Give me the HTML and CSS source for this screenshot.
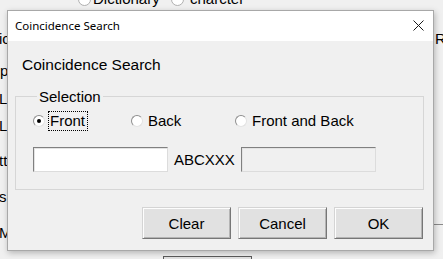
FILE: index.html
```html
<!DOCTYPE html>
<html>
<head>
<meta charset="utf-8">
<link rel="stylesheet" href="styles.css">
</head>
<body>
<div class="desk">
  <div class="bg-top">
    <span class="bg-radio r1"></span><span class="bg-word w1">Dictionary</span>
    <span class="bg-radio r2"></span><span class="bg-word w2">charcter</span>
  </div>
  <span class="frag f-ic">ic</span>
  <span class="frag f-p">p</span>
  <span class="frag f-l1">L</span>
  <span class="frag f-l2">L</span>
  <span class="frag f-tt">tt</span>
  <span class="frag f-s">s</span>
  <span class="frag f-m">M</span>
  <span class="frag f-re">Re</span>
  <span class="bg-line"></span>
  <span class="bg-btn"></span>

  <div class="dialog">
    <div class="titlebar">
      <span class="title">Coincidence Search</span>
      <svg class="close" width="11" height="11" viewBox="0 0 11 11"><path d="M0.5 0.5 L10.5 10.5 M10.5 0.5 L0.5 10.5" stroke="#1a1a1a" stroke-width="1" fill="none"/></svg>
    </div>
    <div class="body">
      <div class="heading">Coincidence Search</div>
      <fieldset class="group">
        <legend class="legend">Selection</legend>
        <div class="radios">
          <div class="opt opt-front"><span class="radio checked"></span><span class="lbl focus">Front</span></div>
          <div class="opt opt-back"><span class="radio"></span><span class="lbl">Back</span></div>
          <div class="opt"><span class="radio"></span><span class="lbl">Front and Back</span></div>
        </div>
        <div class="fields">
          <div class="field"></div>
          <span class="code">ABCXXX</span>
          <div class="field disabled"></div>
        </div>
      </fieldset>
      <div class="buttons">
        <div class="btn">Clear</div>
        <div class="btn">Cancel</div>
        <div class="btn">OK</div>
      </div>
    </div>
  </div>
</div>
</body>
</html>
```
FILE: styles.css
```css
html, body {
  margin: 0;
  padding: 0;
}
body {
  background: #f0f0f0;
  font-family: "Liberation Sans", Arial, sans-serif;
  font-size: 15px;
  color: #000;
}
.desk {
  position: relative;
  width: 443px;
  height: 259px;
  overflow: hidden;
}
.bg-top {
  position: absolute;
  left: 0;
  top: -10px;
  width: 443px;
  height: 17px;
}
.bg-word {
  position: absolute;
  top: 0;
  line-height: 17px;
  font-size: 15px;
  color: #000;
}
.w1 { left: 93px; }
.w2 { left: 190px; }
.bg-radio {
  position: absolute;
  top: 3px;
  width: 11px;
  height: 11px;
  border-radius: 50%;
  border: 1px solid #b0b0b0;
  background: #fff;
}
.r1 { left: 78px; }
.r2 { left: 171px; }
.frag {
  position: absolute;
  left: 0;
  line-height: 17px;
  font-size: 15px;
}
.f-ic { top: 30px; left: -1px; }
.f-p { top: 62px; }
.f-l1 { top: 90px; left: -1px; }
.f-l2 { top: 117px; left: -1px; }
.f-tt { top: 152px; left: -1px; }
.f-s { top: 188px; left: -1px; }
.f-m { top: 224px; left: -1px; }
.f-re { top: 30px; left: 435px; }
.bg-line {
  position: absolute;
  left: 433px;
  top: 224px;
  width: 10px;
  height: 1px;
  background: #8a8a8a;
}
.bg-btn {
  position: absolute;
  left: 163px;
  top: 256px;
  width: 87px;
  height: 10px;
  border: 1px solid #5a5a5a;
  background: #e1e1e1;
}

.dialog {
  position: absolute;
  left: 7px;
  top: 10px;
  width: 427px;
  height: 241px;
  box-sizing: border-box;
  border: 1px solid #a8a8a8;
  background: #f0f0f0;
  box-shadow: 1px 2px 6px rgba(0, 0, 0, 0.25);
  display: flex;
  flex-direction: column;
}
.titlebar {
  height: 30px;
  flex: none;
  background: #fff;
  display: flex;
  align-items: center;
  justify-content: space-between;
  padding: 0 9px 0 7px;
}
.title {
  font-family: "Noto Sans", sans-serif;
  font-size: 11.5px;
  color: #000;
  position: relative;
  top: -1px;
}
.close {
  display: block;
  margin-top: -2px;
}
.body {
  flex: 1;
  display: flex;
  flex-direction: column;
  padding: 0 9px 0 7px;
}
.heading {
  font-size: 15.5px;
  line-height: 18px;
  margin: 15px 0 0 7px;
}
.group {
  margin: 14px 0 0 0;
  padding: 0 0 0 17px;
  border: 1px solid #d6d6d6;
  height: 102px;
  box-sizing: border-box;
  min-width: 0;
}
.legend {
  padding: 0 2px;
  margin-left: 4px;
  line-height: 17px;
}
.radios {
  display: flex;
  align-items: center;
  height: 22px;
  margin-top: 5px;
}
.opt {
  display: flex;
  align-items: center;
  gap: 3px;
}
.opt-front { width: 98px; }
.opt-back { width: 104px; }
.radio {
  width: 12px;
  height: 12px;
  box-sizing: border-box;
  border-radius: 50%;
  border: 1px solid;
  border-color: #8e8e8e #e2e2e2 #e2e2e2 #8e8e8e;
  background: #fff;
  display: flex;
  align-items: center;
  justify-content: center;
}
.radio.checked::after {
  content: "";
  width: 4px;
  height: 4px;
  border-radius: 50%;
  background: #000;
}
.lbl {
  line-height: 18px;
  padding: 0 2px 0 1px;
  border: 1px dotted transparent;
}
.lbl.focus {
  border-color: #000;
}
.fields {
  display: flex;
  align-items: center;
  gap: 6px;
  margin-top: 15px;
}
.field {
  width: 135px;
  height: 25px;
  box-sizing: border-box;
  background: #fff;
  border: 1px solid;
  border-color: #808080 #dcdcdc #dcdcdc #808080;
  box-shadow: inset 1px 1px 0 #e3e3e3;
}
.field.disabled {
  background: #f0f0f0;
}
.code {
  line-height: 18px;
}
.buttons {
  display: flex;
  justify-content: flex-end;
  gap: 7px;
  margin-top: 17px;
  padding-right: 1px;
}
.btn {
  width: 89px;
  height: 32px;
  box-sizing: border-box;
  background: #e1e1e1;
  border: 1px solid;
  border-color: #d4d4d4 #767676 #767676 #d4d4d4;
  box-shadow: inset 1px 1px 0 #fdfdfd, inset -1px -1px 0 #b4b4b4;
  display: flex;
  align-items: center;
  justify-content: center;
  font-size: 15px;
}
```
